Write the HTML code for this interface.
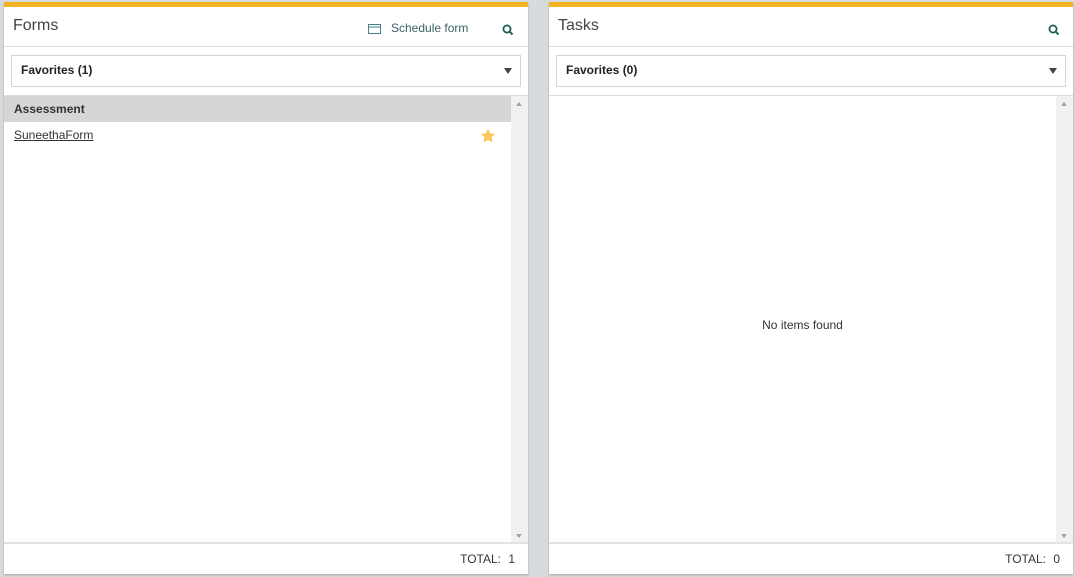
<!DOCTYPE html>
<html><head><style>
body{margin:0;width:1075px;height:577px;background:#d8dbdd;font-family:"Liberation Sans",sans-serif;position:relative;overflow:hidden}
.p{position:absolute;top:2px;height:572px;background:#fff;box-shadow:0 1px 2px rgba(0,0,0,.25)}
.bar{position:absolute;left:0;right:0;top:0;height:5px;background:#f5b322}
.hd{position:absolute;left:0;right:0;top:5px;height:39px;border-bottom:1px solid #ddd}
.tt{position:absolute;left:9px;top:10px;font-size:16px;color:#444}
.dd{position:absolute;left:7px;right:7px;top:53px;height:30px;border:1px solid #d4d4d4;font-size:12px;font-weight:bold;color:#222}
.dd span{position:absolute;left:9px;top:7px}
.dd i{position:absolute;right:8px;top:12px;width:0;height:0;border-left:4px solid transparent;border-right:4px solid transparent;border-top:6px solid #444}
.ls{position:absolute;left:0;right:0;top:93px;height:448px;border-top:1px solid #ddd}
.sb{position:absolute;right:0;top:0;width:17px;bottom:0;background:#f1f1f1}
.sb:before{content:"";position:absolute;left:5px;top:6px;border-left:3.5px solid transparent;border-right:3.5px solid transparent;border-bottom:4px solid #a3a3a3}
.sb:after{content:"";position:absolute;left:5px;bottom:6px;border-left:3.5px solid transparent;border-right:3.5px solid transparent;border-top:4px solid #a3a3a3}
.ft{position:absolute;left:0;right:0;bottom:0;height:30px;border-top:2px solid #e3e3e3;font-size:12px;color:#333}
.ft span{position:absolute;right:13px;top:8px;word-spacing:4px}
.srch{position:absolute;top:17px}
</style></head><body>
<div class="p" style="left:4px;width:524px">
<div class="bar"></div>
<div class="hd"><div class="tt">Forms</div>
<svg style="position:absolute;left:364px;top:16px" width="14" height="12" viewBox="0 0 14 12"><rect x="0.5" y="1.5" width="12" height="9" fill="none" stroke="#4a7f8a"/><line x1="0.5" y1="4" x2="12.5" y2="4" stroke="#4a7f8a"/></svg>
<div style="position:absolute;left:387px;top:14px;font-size:12px;color:#3d6068">Schedule form</div>
<svg class="srch" style="left:498px" width="12" height="12" viewBox="0 0 12 12"><circle cx="5" cy="5" r="3.6" fill="none" stroke="#1f5e54" stroke-width="1.8"/><line x1="7.6" y1="7.6" x2="10.5" y2="10.5" stroke="#1f5e54" stroke-width="2"/></svg>
</div>
<div class="dd"><span>Favorites (1)</span><i></i></div>
<div class="ls">
<div style="position:absolute;left:0;right:17px;top:0;height:26px;background:#d6d6d6;font-size:12px;font-weight:bold;color:#333"><span style="position:absolute;left:10px;top:6px">Assessment</span></div>
<div style="position:absolute;left:10px;top:32px;font-size:12px;color:#333;text-decoration:underline">SuneethaForm</div>
<svg style="position:absolute;left:476px;top:32px" width="16" height="15" viewBox="0 0 24 23"><path d="M12 1l3.4 7 7.6 1-5.5 5.3 1.3 7.7L12 18.4 5.2 22l1.3-7.7L1 9l7.6-1z" fill="#fbc65a"/></svg>
<div class="sb"></div>
</div>
<div class="ft"><span>TOTAL: 1</span></div>
</div>
<div class="p" style="left:549px;width:524px">
<div class="bar"></div>
<div class="hd"><div class="tt">Tasks</div>
<svg class="srch" style="left:499px" width="12" height="12" viewBox="0 0 12 12"><circle cx="5" cy="5" r="3.6" fill="none" stroke="#1f5e54" stroke-width="1.8"/><line x1="7.6" y1="7.6" x2="10.5" y2="10.5" stroke="#1f5e54" stroke-width="2"/></svg>
</div>
<div class="dd"><span>Favorites (0)</span><i></i></div>
<div class="ls">
<div style="position:absolute;left:0;right:17px;top:222px;text-align:center;font-size:12px;color:#333">No items found</div>
<div class="sb"></div>
</div>
<div class="ft"><span>TOTAL: 0</span></div>
</div>
</body></html>
